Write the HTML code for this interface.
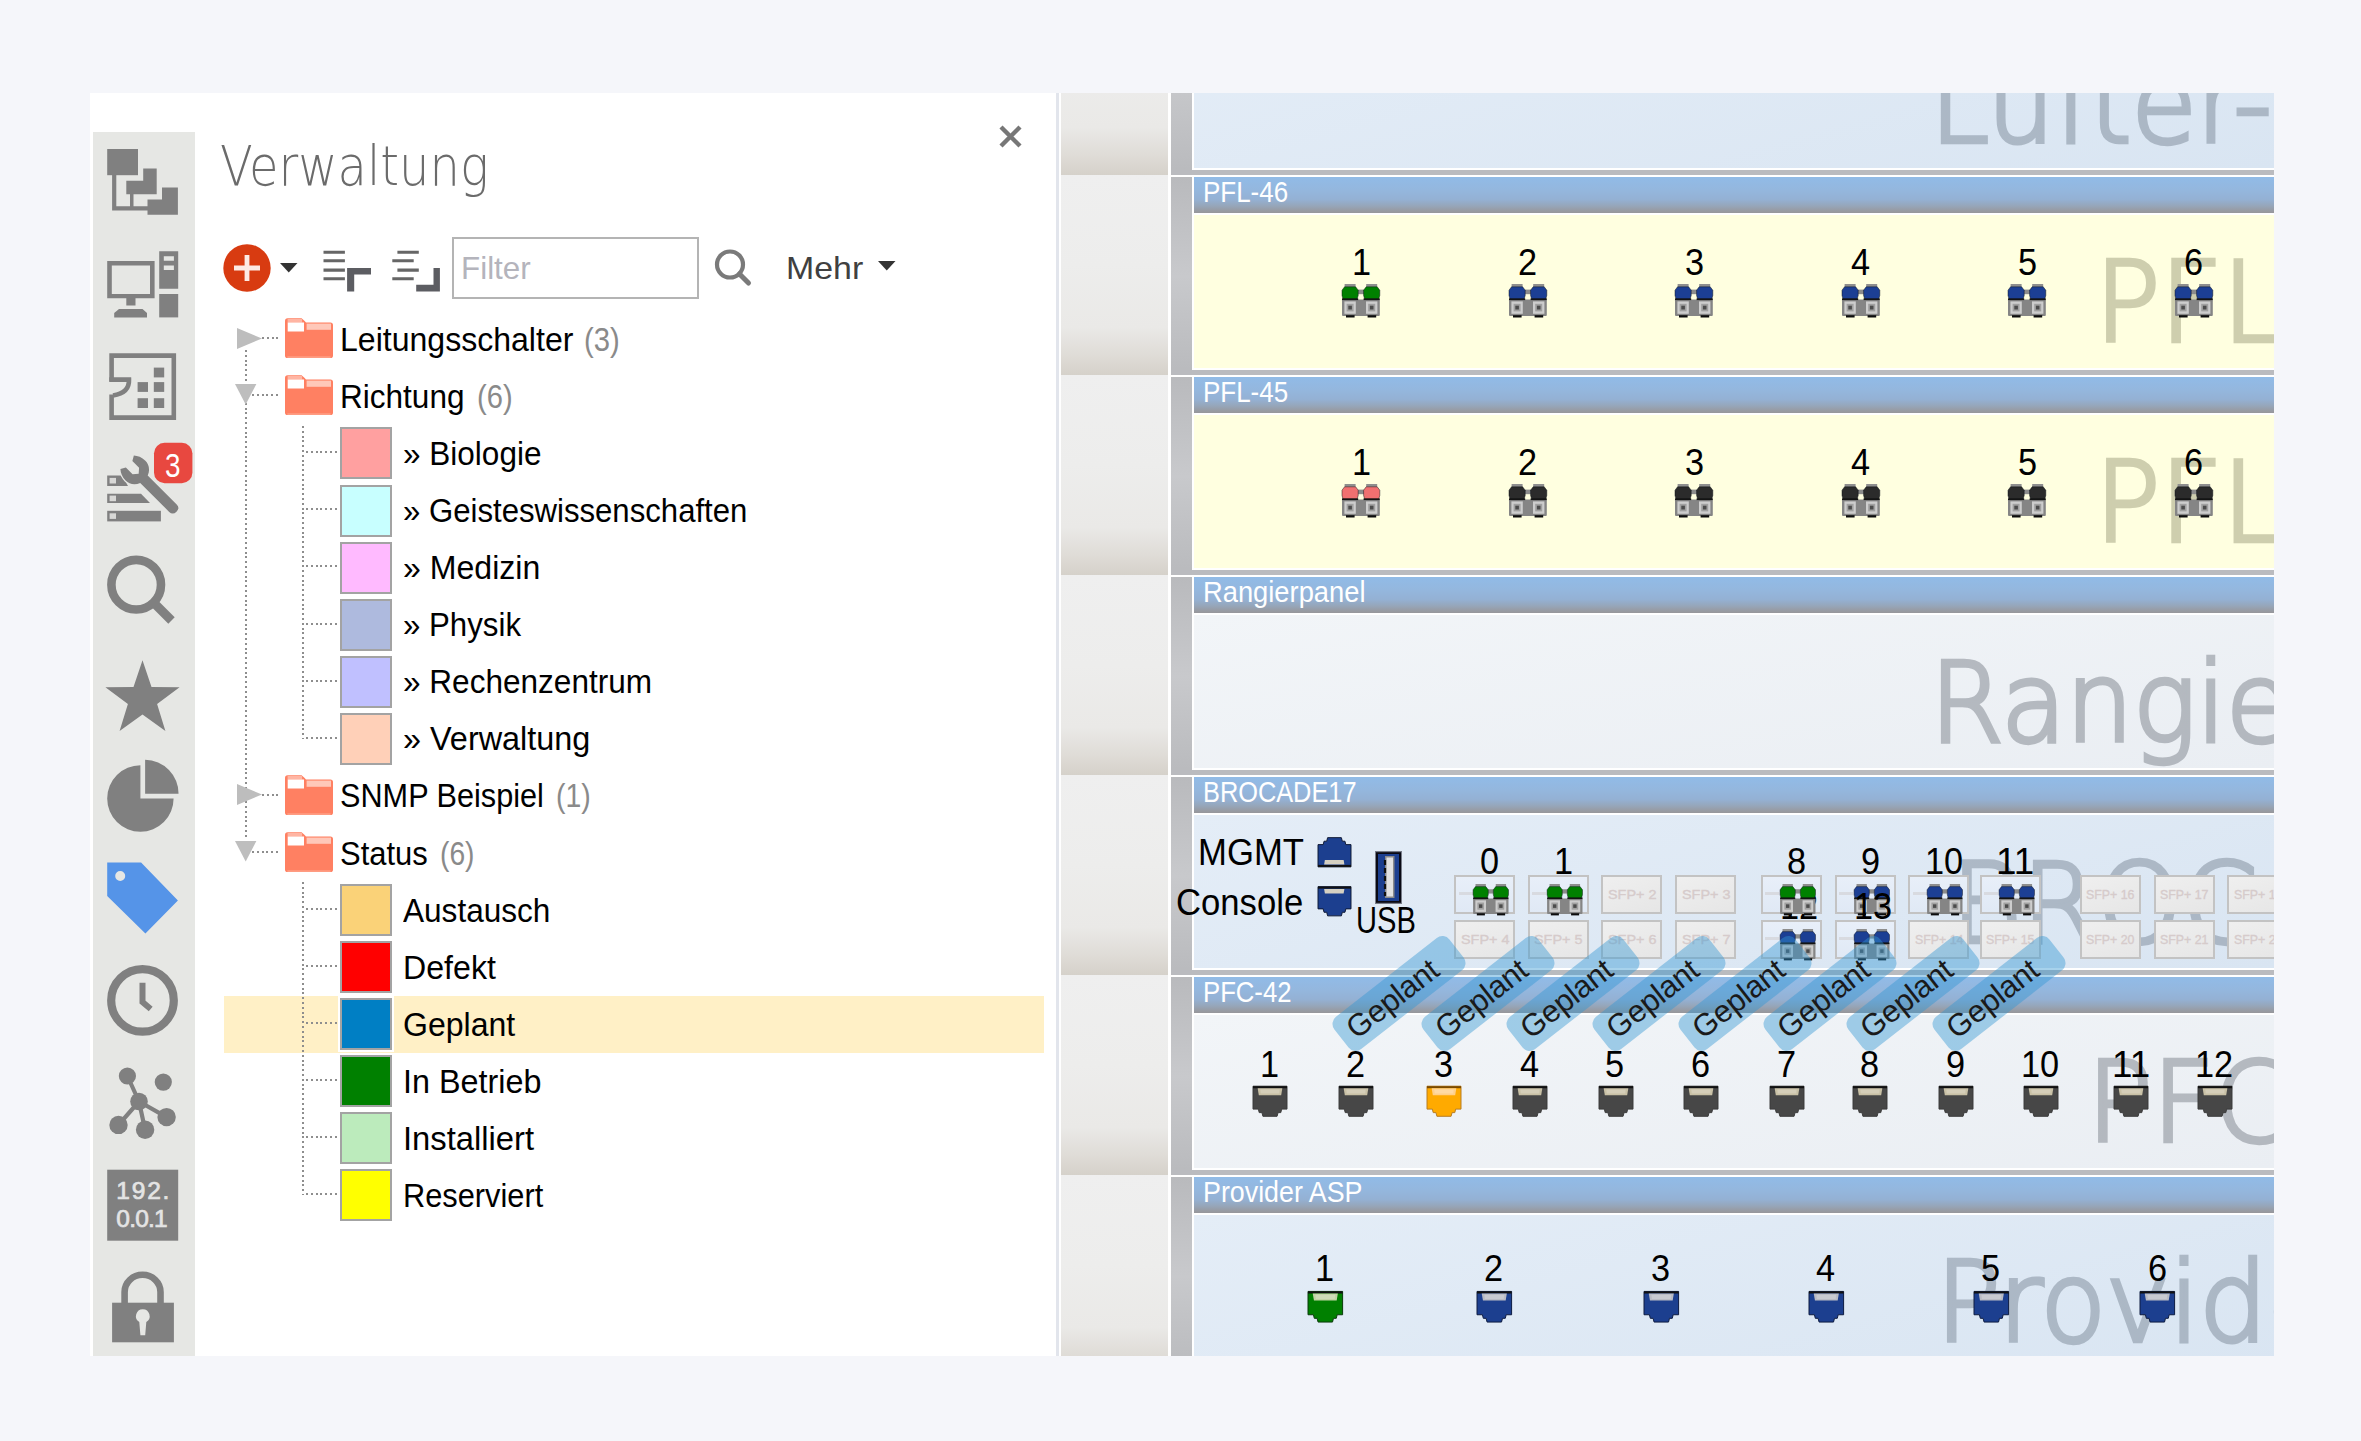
<!DOCTYPE html>
<html lang="de"><head><meta charset="utf-8"><title>Verwaltung</title>
<style>

html,body{margin:0;padding:0}
body{width:2361px;height:1441px;background:#f5f6fa;position:relative;overflow:hidden;font-family:'Liberation Sans',sans-serif}
.t{position:absolute;white-space:pre;line-height:1;transform-origin:0 50%}
.a{position:absolute}
#frame{left:90px;top:93px;width:2184px;height:1263px;background:#fff;overflow:hidden}
#side{left:93px;top:132px;width:102px;height:1224px;background:#e6e7e4}
svg{position:absolute;overflow:visible}
.sw{position:absolute;width:48px;height:48px;border:2px solid #a3a3a3;box-shadow:0 0 0 2px #fff}
.dv{position:absolute;width:2px;background:repeating-linear-gradient(180deg,#8e8e8e 0 2px,transparent 2px 4.8px)}
.dh{position:absolute;height:2px;background:repeating-linear-gradient(90deg,#8e8e8e 0 2px,transparent 2px 4.8px)}
.rk{position:absolute;left:1061px;width:1213px;height:200px}
.lc{position:absolute;left:0;top:0;width:107px;height:200px;background:linear-gradient(#efefef 0%,#ededec 45%,#eae9e7 76%,#dfdcd7 90%,#d5d1ca 100%)}
.vb{position:absolute;left:110px;top:2px;width:21px;height:198px;background:linear-gradient(#b9babd,#c8c9cc 50%,#b9babd)}
.bl{position:absolute;left:110px;top:195px;width:1104px;height:5px;background:#babbbf}
.tb{position:absolute;left:133px;top:2px;width:1081px;height:36px;background:linear-gradient(#91bbe7 0%,#94b7de 35%,#94b1d4 62%,#96a6ba 80%,#979ca5 92%,#97979b 100%)}
.ct{position:absolute;left:133px;top:40px;width:1081px;height:153px;overflow:hidden}
.yl{background:#ffffe0}
.bu{background:linear-gradient(165deg,#e4edf7,#d9e5f2)}
.gy{background:linear-gradient(170deg,#f2f5f8,#eaeef3)}

</style></head>
<body>
<div id="frame" class="a"></div>
<div id="side" class="a"></div>
<svg style="left:0;top:0" width="2361" height="1441" viewBox="0 0 2361 1441"><g fill="#808080"><rect x="107.2" y="149" width="30.8" height="26.2"/><path d="M143.2 168.5 H156.7 V194.3 H126.3 V180.8 H143.2Z"/><path d="M162 187.5 H177.9 V214.8 H147.5 V199.6 H162Z"/><path d="M112.1 175 H116.3 V206.3 H130 V194 H133.5 V206.3 H148 V210.5 H112.1Z"/></g><g fill="#808080"><path d="M107.2 261 H154.6 V298.3 H107.2Z M111.8 265.4 V293.9 H150 V265.4Z" fill-rule="evenodd"/><rect x="126.3" y="298" width="9.2" height="7.5"/><path d="M119 308.9 H142.5 L147 313 V317.4 H114.2 V313Z"/><path d="M159.2 251.3 H178.2 V288.8 H159.2Z M163.8 256.2 V260.8 H173.9 V256.2Z M163.8 265.4 V270 H173.9 V265.4Z" fill-rule="evenodd"/><rect x="159.2" y="294" width="19" height="23.4"/></g><g fill="none" stroke="#808080" stroke-width="4.6"><path d="M111.6 381.5 V355.6 H173.8 V417.6 H111.6 V394.5"/><path d="M109.3 379.6 H129 Q129.5 393 113 395.5"/></g><g fill="#808080"><rect x="153.8" y="367.6" width="10.4" height="9.8"/><rect x="137.6" y="382.1" width="10.4" height="9.8"/><rect x="153.8" y="382.1" width="10.4" height="9.8"/><rect x="137.6" y="398.2" width="10.4" height="9.8"/><rect x="153.8" y="398.2" width="10.4" height="9.8"/></g><g fill="#808080"><path d="M107.2 475.4 H122 L128 486 H107.2Z"/><path d="M107.2 493.8 H141 L150 503 H107.2Z"/><rect x="107.2" y="510.8" width="53.7" height="10.6"/><rect x="109.6" y="477.9" width="6.4" height="5.6" fill="#d8d8d6"/><rect x="109.6" y="495.6" width="6.4" height="5.6" fill="#d8d8d6"/><rect x="109.6" y="513.3" width="6.4" height="5.6" fill="#d8d8d6"/></g><g transform="translate(137.6 472.8) rotate(-45)"><path d="M-5.3 9 V50 Q-5.3 55 0 55 Q5.3 55 5.3 50 V9 C11 7 14 2 14 -3 C14 -8 12 -12 9.5 -14.8 L4.6 -12 V-2.5 L0 1.5 L-4.6 -2.5 V-12 L-9.5 -14.8 C-12 -12 -14 -8 -14 -3 C-14 2 -11 7 -5.3 9Z" fill="#808080" stroke="#e6e7e4" stroke-width="2.4" paint-order="stroke"/></g><rect x="154" y="442.8" width="38.4" height="40.4" rx="10.5" fill="#e84840"/><circle cx="136.2" cy="584.7" r="24.8" fill="none" stroke="#808080" stroke-width="8.6"/><path d="M154.5 603.5 L171.5 620.5" stroke="#808080" stroke-width="9" stroke-linecap="butt"/><polygon points="142.5,660.3 151.5,686.9 179.6,687.2 157.1,704.0 165.4,730.9 142.5,714.6 119.6,730.9 127.9,704.0 105.4,687.2 133.5,686.9" fill="#808080"/><path d="M140.4 798.5 V765.3 A33.2 33.2 0 1 0 173.6 798.5Z" fill="#808080"/><path d="M145.1 793.8 V759.8 A34 33.4 0 0 1 178.5 793.8Z" fill="#808080"/><path d="M107.2 862.6 H141.1 L177.9 900.4 L145.4 933.6 L107.2 896.1Z M120.2 871 A5 5 0 1 0 120.2 881 A5 5 0 1 0 120.2 871Z" fill="#5594e8" fill-rule="evenodd"/><circle cx="142.5" cy="1000.4" r="31.3" fill="none" stroke="#808080" stroke-width="8.2"/><path d="M142.5 982.7 V1002 L150.7 1009" fill="none" stroke="#808080" stroke-width="6" stroke-linejoin="miter"/><g stroke="#808080" stroke-width="4.2"><path d="M139 1101.5 L127.4 1076 M139 1101.5 L166.6 1117.1 M139 1101.5 L145.1 1129.8 M139 1101.5 L118.5 1124.9"/></g><g fill="#808080"><circle cx="139" cy="1101.5" r="8.8"/><circle cx="127.4" cy="1076" r="8.6"/><circle cx="163.3" cy="1082.1" r="8.6"/><circle cx="166.6" cy="1117.1" r="9.2"/><circle cx="145.1" cy="1129.8" r="9.2"/><circle cx="118.5" cy="1124.9" r="9.2"/></g><rect x="107.2" y="1169.7" width="71" height="71" fill="#808080"/><rect x="112.1" y="1302.7" width="61.8" height="39.6" fill="#808080"/><path d="M124.6 1304 V1292 A17.9 17.2 0 0 1 160.5 1292 V1304" fill="none" stroke="#808080" stroke-width="6.6"/><path d="M142.8 1309.2 A6.9 6.9 0 0 1 146.3 1322 L145.2 1335.2 H140.4 L139.3 1322 A6.9 6.9 0 0 1 142.8 1309.2Z" fill="#e6e7e4"/></svg>
<span class="t" style="left:165.2px;top:449.4px;font-size:33px;color:#fff;transform:scaleX(0.8443);">3</span>
<span class="t" style="left:116.3px;top:1179.4px;font-size:24.5px;color:#e4e4e4;letter-spacing:1.80px;-webkit-text-stroke:.7px #e4e4e4;">192.</span>
<span class="t" style="left:116.3px;top:1207.2px;font-size:24.5px;color:#e4e4e4;letter-spacing:-0.78px;-webkit-text-stroke:.7px #e4e4e4;">0.0.1</span>
<span class="t" style="left:219.8px;top:137.6px;font-size:56px;color:#6b6b6b;font-family:'DejaVu Sans', sans-serif;font-weight:200;transform:scaleX(0.8566);">Verwaltung</span>
<div class="a" style="left:224px;top:996px;width:820px;height:57px;background:#fff0c6"></div>
<div class="dv" style="left:245px;top:350px;height:490px"></div>
<div class="dv" style="left:302.3px;top:425.5px;height:313px"></div>
<div class="dv" style="left:302.3px;top:882px;height:313px"></div>
<div class="dh" style="left:262px;top:337.1px;width:16.5px"></div>
<svg style="left:237px;top:327.5px" width="26" height="22"><path d="M0 0 L25 10.5 L0 21Z" fill="#bdbdbd"/></svg>
<svg style="left:285.2px;top:318.1px" width="48" height="40" viewBox="0 0 48 40"><path d="M0 3 Q0 .3 2.6 .3 H16.6 L19.4 2.8 L21 4.4 H45.4 Q48 4.4 48 7 V37.4 Q48 40 45.4 40 H2.6 Q0 40 0 37.4Z" fill="#ff8062"/><rect x="2.6" y="1" width="14.5" height="3.6" fill="#ffb5a3"/><rect x="2.7" y="4.5" width="16.3" height="9" fill="#fff"/><rect x="21.6" y="5.6" width="24.4" height="6.2" fill="#ffc8b9"/><rect x="2.4" y="38.2" width="43.2" height="1.8" fill="#ffa890" opacity=".7"/></svg>
<span class="t" style="left:339.6px;top:322.9px;font-size:33px;color:#000;transform:scaleX(0.9712);">Leitungsschalter</span>
<span class="t" style="left:584.0px;top:322.9px;font-size:33px;color:#8a8a8a;transform:scaleX(0.8849);">(3)</span>
<div class="dh" style="left:252.4px;top:394.2px;width:26px"></div>
<svg style="left:235.3px;top:384.1px" width="22" height="22"><path d="M0 0 L21.4 0 L10.7 20.6Z" fill="#bebebe"/></svg>
<svg style="left:285.2px;top:375.2px" width="48" height="40" viewBox="0 0 48 40"><path d="M0 3 Q0 .3 2.6 .3 H16.6 L19.4 2.8 L21 4.4 H45.4 Q48 4.4 48 7 V37.4 Q48 40 45.4 40 H2.6 Q0 40 0 37.4Z" fill="#ff8062"/><rect x="2.6" y="1" width="14.5" height="3.6" fill="#ffb5a3"/><rect x="2.7" y="4.5" width="16.3" height="9" fill="#fff"/><rect x="21.6" y="5.6" width="24.4" height="6.2" fill="#ffc8b9"/><rect x="2.4" y="38.2" width="43.2" height="1.8" fill="#ffa890" opacity=".7"/></svg>
<span class="t" style="left:339.6px;top:379.9px;font-size:33px;color:#000;transform:scaleX(0.9559);">Richtung</span>
<span class="t" style="left:476.8px;top:379.9px;font-size:33px;color:#8a8a8a;transform:scaleX(0.8824);">(6)</span>
<div class="dh" style="left:262px;top:793.7px;width:16.5px"></div>
<svg style="left:237px;top:784.1px" width="26" height="22"><path d="M0 0 L25 10.5 L0 21Z" fill="#bdbdbd"/></svg>
<svg style="left:285.2px;top:774.7px" width="48" height="40" viewBox="0 0 48 40"><path d="M0 3 Q0 .3 2.6 .3 H16.6 L19.4 2.8 L21 4.4 H45.4 Q48 4.4 48 7 V37.4 Q48 40 45.4 40 H2.6 Q0 40 0 37.4Z" fill="#ff8062"/><rect x="2.6" y="1" width="14.5" height="3.6" fill="#ffb5a3"/><rect x="2.7" y="4.5" width="16.3" height="9" fill="#fff"/><rect x="21.6" y="5.6" width="24.4" height="6.2" fill="#ffc8b9"/><rect x="2.4" y="38.2" width="43.2" height="1.8" fill="#ffa890" opacity=".7"/></svg>
<span class="t" style="left:339.6px;top:779.4px;font-size:33px;color:#000;transform:scaleX(0.9290);">SNMP Beispiel</span>
<span class="t" style="left:555.7px;top:779.4px;font-size:33px;color:#8a8a8a;transform:scaleX(0.8626);">(1)</span>
<div class="dh" style="left:252.4px;top:850.7px;width:26px"></div>
<svg style="left:235.3px;top:840.6px" width="22" height="22"><path d="M0 0 L21.4 0 L10.7 20.6Z" fill="#bebebe"/></svg>
<svg style="left:285.2px;top:831.7px" width="48" height="40" viewBox="0 0 48 40"><path d="M0 3 Q0 .3 2.6 .3 H16.6 L19.4 2.8 L21 4.4 H45.4 Q48 4.4 48 7 V37.4 Q48 40 45.4 40 H2.6 Q0 40 0 37.4Z" fill="#ff8062"/><rect x="2.6" y="1" width="14.5" height="3.6" fill="#ffb5a3"/><rect x="2.7" y="4.5" width="16.3" height="9" fill="#fff"/><rect x="21.6" y="5.6" width="24.4" height="6.2" fill="#ffc8b9"/><rect x="2.4" y="38.2" width="43.2" height="1.8" fill="#ffa890" opacity=".7"/></svg>
<span class="t" style="left:339.6px;top:836.5px;font-size:33px;color:#000;transform:scaleX(0.9373);">Status</span>
<span class="t" style="left:439.8px;top:836.5px;font-size:33px;color:#8a8a8a;transform:scaleX(0.8552);">(6)</span>
<div class="dh" style="left:305.6px;top:451.2px;width:31px"></div>
<div class="sw" style="left:340.2px;top:427.4px;background:#ffa0a0"></div>
<span class="t" style="left:403.1px;top:437.0px;font-size:33px;color:#000;transform:scaleX(0.9555);">» Biologie</span>
<div class="dh" style="left:305.6px;top:508.3px;width:31px"></div>
<div class="sw" style="left:340.2px;top:484.5px;background:#c8ffff"></div>
<span class="t" style="left:403.1px;top:494.1px;font-size:33px;color:#000;transform:scaleX(0.9435);">» Geisteswissenschaften</span>
<div class="dh" style="left:305.6px;top:565.4px;width:31px"></div>
<div class="sw" style="left:340.2px;top:541.6px;background:#ffbaff"></div>
<span class="t" style="left:403.1px;top:551.1px;font-size:33px;color:#000;transform:scaleX(0.9721);">» Medizin</span>
<div class="dh" style="left:305.6px;top:622.5px;width:31px"></div>
<div class="sw" style="left:340.2px;top:598.6px;background:#aebade"></div>
<span class="t" style="left:403.1px;top:608.2px;font-size:33px;color:#000;transform:scaleX(0.9461);">» Physik</span>
<div class="dh" style="left:305.6px;top:679.5px;width:31px"></div>
<div class="sw" style="left:340.2px;top:655.7px;background:#c0c0ff"></div>
<span class="t" style="left:403.1px;top:665.3px;font-size:33px;color:#000;transform:scaleX(0.9563);">» Rechenzentrum</span>
<div class="dh" style="left:305.6px;top:736.6px;width:31px"></div>
<div class="sw" style="left:340.2px;top:712.8px;background:#ffd0b8"></div>
<span class="t" style="left:403.1px;top:722.4px;font-size:33px;color:#000;transform:scaleX(0.9821);">» Verwaltung</span>
<div class="dh" style="left:305.6px;top:907.8px;width:31px"></div>
<div class="sw" style="left:340.2px;top:884.0px;background:#fad278"></div>
<span class="t" style="left:403.1px;top:893.6px;font-size:33px;color:#000;transform:scaleX(0.9566);">Austausch</span>
<div class="dh" style="left:305.6px;top:964.9px;width:31px"></div>
<div class="sw" style="left:340.2px;top:941.1px;background:#ff0000"></div>
<span class="t" style="left:403.1px;top:950.6px;font-size:33px;color:#000;transform:scaleX(0.9740);">Defekt</span>
<div class="dh" style="left:305.6px;top:1021.9px;width:31px"></div>
<div class="sw" style="left:340.2px;top:998.1px;background:#007fc4"></div>
<span class="t" style="left:403.1px;top:1007.7px;font-size:33px;color:#000;transform:scaleX(0.9706);">Geplant</span>
<div class="dh" style="left:305.6px;top:1079.0px;width:31px"></div>
<div class="sw" style="left:340.2px;top:1055.2px;background:#008000"></div>
<span class="t" style="left:403.1px;top:1064.8px;font-size:33px;color:#000;transform:scaleX(0.9798);">In Betrieb</span>
<div class="dh" style="left:305.6px;top:1136.1px;width:31px"></div>
<div class="sw" style="left:340.2px;top:1112.3px;background:#bcebbc"></div>
<span class="t" style="left:403.1px;top:1121.8px;font-size:33px;color:#000;transform:scaleX(0.9927);">Installiert</span>
<div class="dh" style="left:305.6px;top:1193.1px;width:31px"></div>
<div class="sw" style="left:340.2px;top:1169.3px;background:#ffff00"></div>
<span class="t" style="left:403.1px;top:1178.9px;font-size:33px;color:#000;transform:scaleX(0.9323);">Reserviert</span>
<svg style="left:223px;top:244px" width="48" height="48" viewBox="0 0 48 48"><circle cx="24" cy="24" r="23.7" fill="#d83b11"/><path d="M11 24 H37 M24 11 V37" stroke="#fdeae4" stroke-width="4.8"/></svg>
<svg style="left:280px;top:263px" width="18" height="10"><path d="M0 0 H17.5 L8.75 9.5Z" fill="#333"/></svg>
<svg style="left:0;top:0" width="460" height="300" viewBox="0 0 460 300"><g stroke="#666" stroke-width="3.1"><path d="M323.5 252.3 H344.9 M323.5 260.8 H344.9 M323.5 270.1 H344.9 M323.5 278.7 H344.9"/><path d="M397.4 252.3 H418.8 M392.3 260.8 H413.7 M397.4 270.1 H418.8 M392.3 278.7 H413.7"/></g><g fill="#5c5d62"><path d="M347.1 268 H371 V274.6 H354.2 V291.4 H347.1Z"/><path d="M433.5 268 H439.9 V291.4 H416.2 V284.8 H433.5Z"/></g></svg>
<div class="a" style="left:452px;top:237px;width:243px;height:58px;border:2px solid #b4b4b4;background:#fff"></div>
<span class="t" style="left:461.0px;top:252.4px;font-size:32px;color:#b4b4bc;transform:scaleX(0.9802);">Filter</span>
<svg style="left:713px;top:248px" width="40" height="40" viewBox="0 0 40 40"><circle cx="17" cy="16.5" r="13" fill="none" stroke="#7a7a7a" stroke-width="4.2"/><path d="M26.5 26 L35.5 35" stroke="#7a7a7a" stroke-width="5" stroke-linecap="round"/></svg>
<span class="t" style="left:786.3px;top:252.4px;font-size:32px;color:#404040;transform:scaleX(1.0589);">Mehr</span>
<svg style="left:878px;top:261px" width="18" height="10"><path d="M0 0 H17.5 L8.75 9.5Z" fill="#333"/></svg>
<svg style="left:999px;top:125px" width="23" height="23" viewBox="0 0 23 23"><path d="M2 2 L21 21 M21 2 L2 21" stroke="#777" stroke-width="4.4"/></svg>
<div class="a" style="left:1056px;top:93px;width:3px;height:1263px;background:#e2e5ec"></div>
<div class="a" id="rack" style="left:1061px;top:93px;width:1213px;height:1263px;overflow:hidden;background:#fff">
<div class="rk" style="top:-118px;left:0"><div class="lc"></div><div class="vb"></div><div class="bl"></div><div class="tb"></div><div class="ct bu"></div></div>
<span class="t" style="left:869.0px;top:-44.7px;font-size:111px;color:#7d8a99;font-family:'DejaVu Sans', sans-serif;font-weight:200;-webkit-text-stroke:4.4px #7d8a99;opacity:0.5;transform:scaleX(0.955);">Lüfter-</span>
<div class="rk" style="top:82px;left:0"><div class="lc"></div><div class="vb"></div><div class="bl"></div><div class="tb"></div><div class="ct yl"></div></div>
<span class="t" style="left:141.5px;top:84.4px;font-size:29.5px;color:#fff;transform:scaleX(0.8796);">PFL-46</span>
<span class="t" style="left:1034.0px;top:154.3px;font-size:111px;color:#8c8c6a;font-family:'DejaVu Sans', sans-serif;font-weight:200;-webkit-text-stroke:4.4px #8c8c6a;opacity:0.42;transform:scaleX(0.975);">PFL-46</span>
<div class="rk" style="top:282px;left:0"><div class="lc"></div><div class="vb"></div><div class="bl"></div><div class="tb"></div><div class="ct yl"></div></div>
<span class="t" style="left:141.5px;top:284.4px;font-size:29.5px;color:#fff;transform:scaleX(0.8796);">PFL-45</span>
<span class="t" style="left:1034.0px;top:354.3px;font-size:111px;color:#8c8c6a;font-family:'DejaVu Sans', sans-serif;font-weight:200;-webkit-text-stroke:4.4px #8c8c6a;opacity:0.42;transform:scaleX(0.975);">PFL-45</span>
<span class="t" style="left:291.0px;top:151.6px;font-size:36px;color:#000;transform:scaleX(0.9525);">1</span>
<svg style="left:281.0px;top:191.4px" width="37.8" height="33.5" viewBox="0 0 37.8 33.5"><rect x="0" y="15.5" width="37.8" height="16.4" rx="1" fill="#858585"/><rect x="15.8" y="5.6" width="6.2" height="4.6" fill="#8c8c8c"/><path d="M2.6 0 H13.6 V2.9 H2.6Z" fill="#8e8e8e"/><path d="M2.6 2.8 H13.6 L16.2 6.2 V11.4 L15.2 15 H1 L0 11.4 V6.2Z" fill="#008000" stroke="#0c1018" stroke-width=".8" stroke-opacity=".6"/><rect x="0" y="14.4" width="16.2" height="1.7" fill="#141414"/><rect x="2.4" y="17.4" width="11.4" height="12.4" fill="#cdcdcd"/><rect x="4.6" y="19.8" width="7" height="7.6" fill="#a0a0a0"/><rect x="6.3" y="21.7" width="3.6" height="3.8" fill="#4c4c4c"/><rect x="4" y="31.2" width="8.6" height="2.3" fill="#0c0c0c"/><path d="M24.200000000000003 0 H35.2 V2.9 H24.200000000000003Z" fill="#8e8e8e"/><path d="M24.200000000000003 2.8 H35.2 L37.8 6.2 V11.4 L36.8 15 H22.6 L21.6 11.4 V6.2Z" fill="#008000" stroke="#0c1018" stroke-width=".8" stroke-opacity=".6"/><rect x="21.6" y="14.4" width="16.2" height="1.7" fill="#141414"/><rect x="24.0" y="17.4" width="11.4" height="12.4" fill="#cdcdcd"/><rect x="26.200000000000003" y="19.8" width="7" height="7.6" fill="#a0a0a0"/><rect x="27.900000000000002" y="21.7" width="3.6" height="3.8" fill="#4c4c4c"/><rect x="25.6" y="31.2" width="8.6" height="2.3" fill="#0c0c0c"/></svg>
<span class="t" style="left:457.4px;top:151.6px;font-size:36px;color:#000;transform:scaleX(0.9525);">2</span>
<svg style="left:447.5px;top:191.4px" width="37.8" height="33.5" viewBox="0 0 37.8 33.5"><rect x="0" y="15.5" width="37.8" height="16.4" rx="1" fill="#858585"/><rect x="15.8" y="5.6" width="6.2" height="4.6" fill="#8c8c8c"/><path d="M2.6 0 H13.6 V2.9 H2.6Z" fill="#8e8e8e"/><path d="M2.6 2.8 H13.6 L16.2 6.2 V11.4 L15.2 15 H1 L0 11.4 V6.2Z" fill="#1c3f94" stroke="#0c1018" stroke-width=".8" stroke-opacity=".6"/><rect x="0" y="14.4" width="16.2" height="1.7" fill="#141414"/><rect x="2.4" y="17.4" width="11.4" height="12.4" fill="#cdcdcd"/><rect x="4.6" y="19.8" width="7" height="7.6" fill="#a0a0a0"/><rect x="6.3" y="21.7" width="3.6" height="3.8" fill="#4c4c4c"/><rect x="4" y="31.2" width="8.6" height="2.3" fill="#0c0c0c"/><path d="M24.200000000000003 0 H35.2 V2.9 H24.200000000000003Z" fill="#8e8e8e"/><path d="M24.200000000000003 2.8 H35.2 L37.8 6.2 V11.4 L36.8 15 H22.6 L21.6 11.4 V6.2Z" fill="#1c3f94" stroke="#0c1018" stroke-width=".8" stroke-opacity=".6"/><rect x="21.6" y="14.4" width="16.2" height="1.7" fill="#141414"/><rect x="24.0" y="17.4" width="11.4" height="12.4" fill="#cdcdcd"/><rect x="26.200000000000003" y="19.8" width="7" height="7.6" fill="#a0a0a0"/><rect x="27.900000000000002" y="21.7" width="3.6" height="3.8" fill="#4c4c4c"/><rect x="25.6" y="31.2" width="8.6" height="2.3" fill="#0c0c0c"/></svg>
<span class="t" style="left:623.9px;top:151.6px;font-size:36px;color:#000;transform:scaleX(0.9525);">3</span>
<svg style="left:614.0px;top:191.4px" width="37.8" height="33.5" viewBox="0 0 37.8 33.5"><rect x="0" y="15.5" width="37.8" height="16.4" rx="1" fill="#858585"/><rect x="15.8" y="5.6" width="6.2" height="4.6" fill="#8c8c8c"/><path d="M2.6 0 H13.6 V2.9 H2.6Z" fill="#8e8e8e"/><path d="M2.6 2.8 H13.6 L16.2 6.2 V11.4 L15.2 15 H1 L0 11.4 V6.2Z" fill="#1c3f94" stroke="#0c1018" stroke-width=".8" stroke-opacity=".6"/><rect x="0" y="14.4" width="16.2" height="1.7" fill="#141414"/><rect x="2.4" y="17.4" width="11.4" height="12.4" fill="#cdcdcd"/><rect x="4.6" y="19.8" width="7" height="7.6" fill="#a0a0a0"/><rect x="6.3" y="21.7" width="3.6" height="3.8" fill="#4c4c4c"/><rect x="4" y="31.2" width="8.6" height="2.3" fill="#0c0c0c"/><path d="M24.200000000000003 0 H35.2 V2.9 H24.200000000000003Z" fill="#8e8e8e"/><path d="M24.200000000000003 2.8 H35.2 L37.8 6.2 V11.4 L36.8 15 H22.6 L21.6 11.4 V6.2Z" fill="#1c3f94" stroke="#0c1018" stroke-width=".8" stroke-opacity=".6"/><rect x="21.6" y="14.4" width="16.2" height="1.7" fill="#141414"/><rect x="24.0" y="17.4" width="11.4" height="12.4" fill="#cdcdcd"/><rect x="26.200000000000003" y="19.8" width="7" height="7.6" fill="#a0a0a0"/><rect x="27.900000000000002" y="21.7" width="3.6" height="3.8" fill="#4c4c4c"/><rect x="25.6" y="31.2" width="8.6" height="2.3" fill="#0c0c0c"/></svg>
<span class="t" style="left:790.4px;top:151.6px;font-size:36px;color:#000;transform:scaleX(0.9525);">4</span>
<svg style="left:780.5px;top:191.4px" width="37.8" height="33.5" viewBox="0 0 37.8 33.5"><rect x="0" y="15.5" width="37.8" height="16.4" rx="1" fill="#858585"/><rect x="15.8" y="5.6" width="6.2" height="4.6" fill="#8c8c8c"/><path d="M2.6 0 H13.6 V2.9 H2.6Z" fill="#8e8e8e"/><path d="M2.6 2.8 H13.6 L16.2 6.2 V11.4 L15.2 15 H1 L0 11.4 V6.2Z" fill="#1c3f94" stroke="#0c1018" stroke-width=".8" stroke-opacity=".6"/><rect x="0" y="14.4" width="16.2" height="1.7" fill="#141414"/><rect x="2.4" y="17.4" width="11.4" height="12.4" fill="#cdcdcd"/><rect x="4.6" y="19.8" width="7" height="7.6" fill="#a0a0a0"/><rect x="6.3" y="21.7" width="3.6" height="3.8" fill="#4c4c4c"/><rect x="4" y="31.2" width="8.6" height="2.3" fill="#0c0c0c"/><path d="M24.200000000000003 0 H35.2 V2.9 H24.200000000000003Z" fill="#8e8e8e"/><path d="M24.200000000000003 2.8 H35.2 L37.8 6.2 V11.4 L36.8 15 H22.6 L21.6 11.4 V6.2Z" fill="#1c3f94" stroke="#0c1018" stroke-width=".8" stroke-opacity=".6"/><rect x="21.6" y="14.4" width="16.2" height="1.7" fill="#141414"/><rect x="24.0" y="17.4" width="11.4" height="12.4" fill="#cdcdcd"/><rect x="26.200000000000003" y="19.8" width="7" height="7.6" fill="#a0a0a0"/><rect x="27.900000000000002" y="21.7" width="3.6" height="3.8" fill="#4c4c4c"/><rect x="25.6" y="31.2" width="8.6" height="2.3" fill="#0c0c0c"/></svg>
<span class="t" style="left:956.9px;top:151.6px;font-size:36px;color:#000;transform:scaleX(0.9525);">5</span>
<svg style="left:947.0px;top:191.4px" width="37.8" height="33.5" viewBox="0 0 37.8 33.5"><rect x="0" y="15.5" width="37.8" height="16.4" rx="1" fill="#858585"/><rect x="15.8" y="5.6" width="6.2" height="4.6" fill="#8c8c8c"/><path d="M2.6 0 H13.6 V2.9 H2.6Z" fill="#8e8e8e"/><path d="M2.6 2.8 H13.6 L16.2 6.2 V11.4 L15.2 15 H1 L0 11.4 V6.2Z" fill="#1c3f94" stroke="#0c1018" stroke-width=".8" stroke-opacity=".6"/><rect x="0" y="14.4" width="16.2" height="1.7" fill="#141414"/><rect x="2.4" y="17.4" width="11.4" height="12.4" fill="#cdcdcd"/><rect x="4.6" y="19.8" width="7" height="7.6" fill="#a0a0a0"/><rect x="6.3" y="21.7" width="3.6" height="3.8" fill="#4c4c4c"/><rect x="4" y="31.2" width="8.6" height="2.3" fill="#0c0c0c"/><path d="M24.200000000000003 0 H35.2 V2.9 H24.200000000000003Z" fill="#8e8e8e"/><path d="M24.200000000000003 2.8 H35.2 L37.8 6.2 V11.4 L36.8 15 H22.6 L21.6 11.4 V6.2Z" fill="#1c3f94" stroke="#0c1018" stroke-width=".8" stroke-opacity=".6"/><rect x="21.6" y="14.4" width="16.2" height="1.7" fill="#141414"/><rect x="24.0" y="17.4" width="11.4" height="12.4" fill="#cdcdcd"/><rect x="26.200000000000003" y="19.8" width="7" height="7.6" fill="#a0a0a0"/><rect x="27.900000000000002" y="21.7" width="3.6" height="3.8" fill="#4c4c4c"/><rect x="25.6" y="31.2" width="8.6" height="2.3" fill="#0c0c0c"/></svg>
<span class="t" style="left:1123.4px;top:151.6px;font-size:36px;color:#000;transform:scaleX(0.9525);">6</span>
<svg style="left:1113.5px;top:191.4px" width="37.8" height="33.5" viewBox="0 0 37.8 33.5"><rect x="0" y="15.5" width="37.8" height="16.4" rx="1" fill="#858585"/><rect x="15.8" y="5.6" width="6.2" height="4.6" fill="#8c8c8c"/><path d="M2.6 0 H13.6 V2.9 H2.6Z" fill="#8e8e8e"/><path d="M2.6 2.8 H13.6 L16.2 6.2 V11.4 L15.2 15 H1 L0 11.4 V6.2Z" fill="#1c3f94" stroke="#0c1018" stroke-width=".8" stroke-opacity=".6"/><rect x="0" y="14.4" width="16.2" height="1.7" fill="#141414"/><rect x="2.4" y="17.4" width="11.4" height="12.4" fill="#cdcdcd"/><rect x="4.6" y="19.8" width="7" height="7.6" fill="#a0a0a0"/><rect x="6.3" y="21.7" width="3.6" height="3.8" fill="#4c4c4c"/><rect x="4" y="31.2" width="8.6" height="2.3" fill="#0c0c0c"/><path d="M24.200000000000003 0 H35.2 V2.9 H24.200000000000003Z" fill="#8e8e8e"/><path d="M24.200000000000003 2.8 H35.2 L37.8 6.2 V11.4 L36.8 15 H22.6 L21.6 11.4 V6.2Z" fill="#1c3f94" stroke="#0c1018" stroke-width=".8" stroke-opacity=".6"/><rect x="21.6" y="14.4" width="16.2" height="1.7" fill="#141414"/><rect x="24.0" y="17.4" width="11.4" height="12.4" fill="#cdcdcd"/><rect x="26.200000000000003" y="19.8" width="7" height="7.6" fill="#a0a0a0"/><rect x="27.900000000000002" y="21.7" width="3.6" height="3.8" fill="#4c4c4c"/><rect x="25.6" y="31.2" width="8.6" height="2.3" fill="#0c0c0c"/></svg>
<span class="t" style="left:291.0px;top:351.6px;font-size:36px;color:#000;transform:scaleX(0.9525);">1</span>
<svg style="left:281.0px;top:391.4px" width="37.8" height="33.5" viewBox="0 0 37.8 33.5"><rect x="0" y="15.5" width="37.8" height="16.4" rx="1" fill="#858585"/><rect x="15.8" y="5.6" width="6.2" height="4.6" fill="#8c8c8c"/><path d="M2.6 0 H13.6 V2.9 H2.6Z" fill="#8e8e8e"/><path d="M2.6 2.8 H13.6 L16.2 6.2 V11.4 L15.2 15 H1 L0 11.4 V6.2Z" fill="#f07070" stroke="#0c1018" stroke-width=".8" stroke-opacity=".6"/><rect x="0" y="14.4" width="16.2" height="1.7" fill="#141414"/><rect x="2.4" y="17.4" width="11.4" height="12.4" fill="#cdcdcd"/><rect x="4.6" y="19.8" width="7" height="7.6" fill="#a0a0a0"/><rect x="6.3" y="21.7" width="3.6" height="3.8" fill="#4c4c4c"/><rect x="4" y="31.2" width="8.6" height="2.3" fill="#0c0c0c"/><path d="M24.200000000000003 0 H35.2 V2.9 H24.200000000000003Z" fill="#8e8e8e"/><path d="M24.200000000000003 2.8 H35.2 L37.8 6.2 V11.4 L36.8 15 H22.6 L21.6 11.4 V6.2Z" fill="#f07070" stroke="#0c1018" stroke-width=".8" stroke-opacity=".6"/><rect x="21.6" y="14.4" width="16.2" height="1.7" fill="#141414"/><rect x="24.0" y="17.4" width="11.4" height="12.4" fill="#cdcdcd"/><rect x="26.200000000000003" y="19.8" width="7" height="7.6" fill="#a0a0a0"/><rect x="27.900000000000002" y="21.7" width="3.6" height="3.8" fill="#4c4c4c"/><rect x="25.6" y="31.2" width="8.6" height="2.3" fill="#0c0c0c"/></svg>
<span class="t" style="left:457.4px;top:351.6px;font-size:36px;color:#000;transform:scaleX(0.9525);">2</span>
<svg style="left:447.5px;top:391.4px" width="37.8" height="33.5" viewBox="0 0 37.8 33.5"><rect x="0" y="15.5" width="37.8" height="16.4" rx="1" fill="#858585"/><rect x="15.8" y="5.6" width="6.2" height="4.6" fill="#8c8c8c"/><path d="M2.6 0 H13.6 V2.9 H2.6Z" fill="#8e8e8e"/><path d="M2.6 2.8 H13.6 L16.2 6.2 V11.4 L15.2 15 H1 L0 11.4 V6.2Z" fill="#2b2b2b" stroke="#0c1018" stroke-width=".8" stroke-opacity=".6"/><rect x="0" y="14.4" width="16.2" height="1.7" fill="#141414"/><rect x="2.4" y="17.4" width="11.4" height="12.4" fill="#cdcdcd"/><rect x="4.6" y="19.8" width="7" height="7.6" fill="#a0a0a0"/><rect x="6.3" y="21.7" width="3.6" height="3.8" fill="#4c4c4c"/><rect x="4" y="31.2" width="8.6" height="2.3" fill="#0c0c0c"/><path d="M24.200000000000003 0 H35.2 V2.9 H24.200000000000003Z" fill="#8e8e8e"/><path d="M24.200000000000003 2.8 H35.2 L37.8 6.2 V11.4 L36.8 15 H22.6 L21.6 11.4 V6.2Z" fill="#2b2b2b" stroke="#0c1018" stroke-width=".8" stroke-opacity=".6"/><rect x="21.6" y="14.4" width="16.2" height="1.7" fill="#141414"/><rect x="24.0" y="17.4" width="11.4" height="12.4" fill="#cdcdcd"/><rect x="26.200000000000003" y="19.8" width="7" height="7.6" fill="#a0a0a0"/><rect x="27.900000000000002" y="21.7" width="3.6" height="3.8" fill="#4c4c4c"/><rect x="25.6" y="31.2" width="8.6" height="2.3" fill="#0c0c0c"/></svg>
<span class="t" style="left:623.9px;top:351.6px;font-size:36px;color:#000;transform:scaleX(0.9525);">3</span>
<svg style="left:614.0px;top:391.4px" width="37.8" height="33.5" viewBox="0 0 37.8 33.5"><rect x="0" y="15.5" width="37.8" height="16.4" rx="1" fill="#858585"/><rect x="15.8" y="5.6" width="6.2" height="4.6" fill="#8c8c8c"/><path d="M2.6 0 H13.6 V2.9 H2.6Z" fill="#8e8e8e"/><path d="M2.6 2.8 H13.6 L16.2 6.2 V11.4 L15.2 15 H1 L0 11.4 V6.2Z" fill="#2b2b2b" stroke="#0c1018" stroke-width=".8" stroke-opacity=".6"/><rect x="0" y="14.4" width="16.2" height="1.7" fill="#141414"/><rect x="2.4" y="17.4" width="11.4" height="12.4" fill="#cdcdcd"/><rect x="4.6" y="19.8" width="7" height="7.6" fill="#a0a0a0"/><rect x="6.3" y="21.7" width="3.6" height="3.8" fill="#4c4c4c"/><rect x="4" y="31.2" width="8.6" height="2.3" fill="#0c0c0c"/><path d="M24.200000000000003 0 H35.2 V2.9 H24.200000000000003Z" fill="#8e8e8e"/><path d="M24.200000000000003 2.8 H35.2 L37.8 6.2 V11.4 L36.8 15 H22.6 L21.6 11.4 V6.2Z" fill="#2b2b2b" stroke="#0c1018" stroke-width=".8" stroke-opacity=".6"/><rect x="21.6" y="14.4" width="16.2" height="1.7" fill="#141414"/><rect x="24.0" y="17.4" width="11.4" height="12.4" fill="#cdcdcd"/><rect x="26.200000000000003" y="19.8" width="7" height="7.6" fill="#a0a0a0"/><rect x="27.900000000000002" y="21.7" width="3.6" height="3.8" fill="#4c4c4c"/><rect x="25.6" y="31.2" width="8.6" height="2.3" fill="#0c0c0c"/></svg>
<span class="t" style="left:790.4px;top:351.6px;font-size:36px;color:#000;transform:scaleX(0.9525);">4</span>
<svg style="left:780.5px;top:391.4px" width="37.8" height="33.5" viewBox="0 0 37.8 33.5"><rect x="0" y="15.5" width="37.8" height="16.4" rx="1" fill="#858585"/><rect x="15.8" y="5.6" width="6.2" height="4.6" fill="#8c8c8c"/><path d="M2.6 0 H13.6 V2.9 H2.6Z" fill="#8e8e8e"/><path d="M2.6 2.8 H13.6 L16.2 6.2 V11.4 L15.2 15 H1 L0 11.4 V6.2Z" fill="#2b2b2b" stroke="#0c1018" stroke-width=".8" stroke-opacity=".6"/><rect x="0" y="14.4" width="16.2" height="1.7" fill="#141414"/><rect x="2.4" y="17.4" width="11.4" height="12.4" fill="#cdcdcd"/><rect x="4.6" y="19.8" width="7" height="7.6" fill="#a0a0a0"/><rect x="6.3" y="21.7" width="3.6" height="3.8" fill="#4c4c4c"/><rect x="4" y="31.2" width="8.6" height="2.3" fill="#0c0c0c"/><path d="M24.200000000000003 0 H35.2 V2.9 H24.200000000000003Z" fill="#8e8e8e"/><path d="M24.200000000000003 2.8 H35.2 L37.8 6.2 V11.4 L36.8 15 H22.6 L21.6 11.4 V6.2Z" fill="#2b2b2b" stroke="#0c1018" stroke-width=".8" stroke-opacity=".6"/><rect x="21.6" y="14.4" width="16.2" height="1.7" fill="#141414"/><rect x="24.0" y="17.4" width="11.4" height="12.4" fill="#cdcdcd"/><rect x="26.200000000000003" y="19.8" width="7" height="7.6" fill="#a0a0a0"/><rect x="27.900000000000002" y="21.7" width="3.6" height="3.8" fill="#4c4c4c"/><rect x="25.6" y="31.2" width="8.6" height="2.3" fill="#0c0c0c"/></svg>
<span class="t" style="left:956.9px;top:351.6px;font-size:36px;color:#000;transform:scaleX(0.9525);">5</span>
<svg style="left:947.0px;top:391.4px" width="37.8" height="33.5" viewBox="0 0 37.8 33.5"><rect x="0" y="15.5" width="37.8" height="16.4" rx="1" fill="#858585"/><rect x="15.8" y="5.6" width="6.2" height="4.6" fill="#8c8c8c"/><path d="M2.6 0 H13.6 V2.9 H2.6Z" fill="#8e8e8e"/><path d="M2.6 2.8 H13.6 L16.2 6.2 V11.4 L15.2 15 H1 L0 11.4 V6.2Z" fill="#2b2b2b" stroke="#0c1018" stroke-width=".8" stroke-opacity=".6"/><rect x="0" y="14.4" width="16.2" height="1.7" fill="#141414"/><rect x="2.4" y="17.4" width="11.4" height="12.4" fill="#cdcdcd"/><rect x="4.6" y="19.8" width="7" height="7.6" fill="#a0a0a0"/><rect x="6.3" y="21.7" width="3.6" height="3.8" fill="#4c4c4c"/><rect x="4" y="31.2" width="8.6" height="2.3" fill="#0c0c0c"/><path d="M24.200000000000003 0 H35.2 V2.9 H24.200000000000003Z" fill="#8e8e8e"/><path d="M24.200000000000003 2.8 H35.2 L37.8 6.2 V11.4 L36.8 15 H22.6 L21.6 11.4 V6.2Z" fill="#2b2b2b" stroke="#0c1018" stroke-width=".8" stroke-opacity=".6"/><rect x="21.6" y="14.4" width="16.2" height="1.7" fill="#141414"/><rect x="24.0" y="17.4" width="11.4" height="12.4" fill="#cdcdcd"/><rect x="26.200000000000003" y="19.8" width="7" height="7.6" fill="#a0a0a0"/><rect x="27.900000000000002" y="21.7" width="3.6" height="3.8" fill="#4c4c4c"/><rect x="25.6" y="31.2" width="8.6" height="2.3" fill="#0c0c0c"/></svg>
<span class="t" style="left:1123.4px;top:351.6px;font-size:36px;color:#000;transform:scaleX(0.9525);">6</span>
<svg style="left:1113.5px;top:391.4px" width="37.8" height="33.5" viewBox="0 0 37.8 33.5"><rect x="0" y="15.5" width="37.8" height="16.4" rx="1" fill="#858585"/><rect x="15.8" y="5.6" width="6.2" height="4.6" fill="#8c8c8c"/><path d="M2.6 0 H13.6 V2.9 H2.6Z" fill="#8e8e8e"/><path d="M2.6 2.8 H13.6 L16.2 6.2 V11.4 L15.2 15 H1 L0 11.4 V6.2Z" fill="#2b2b2b" stroke="#0c1018" stroke-width=".8" stroke-opacity=".6"/><rect x="0" y="14.4" width="16.2" height="1.7" fill="#141414"/><rect x="2.4" y="17.4" width="11.4" height="12.4" fill="#cdcdcd"/><rect x="4.6" y="19.8" width="7" height="7.6" fill="#a0a0a0"/><rect x="6.3" y="21.7" width="3.6" height="3.8" fill="#4c4c4c"/><rect x="4" y="31.2" width="8.6" height="2.3" fill="#0c0c0c"/><path d="M24.200000000000003 0 H35.2 V2.9 H24.200000000000003Z" fill="#8e8e8e"/><path d="M24.200000000000003 2.8 H35.2 L37.8 6.2 V11.4 L36.8 15 H22.6 L21.6 11.4 V6.2Z" fill="#2b2b2b" stroke="#0c1018" stroke-width=".8" stroke-opacity=".6"/><rect x="21.6" y="14.4" width="16.2" height="1.7" fill="#141414"/><rect x="24.0" y="17.4" width="11.4" height="12.4" fill="#cdcdcd"/><rect x="26.200000000000003" y="19.8" width="7" height="7.6" fill="#a0a0a0"/><rect x="27.900000000000002" y="21.7" width="3.6" height="3.8" fill="#4c4c4c"/><rect x="25.6" y="31.2" width="8.6" height="2.3" fill="#0c0c0c"/></svg>
<div class="rk" style="top:482px;left:0"><div class="lc"></div><div class="vb"></div><div class="bl"></div><div class="tb"></div><div class="ct gy"></div></div>
<span class="t" style="left:141.5px;top:484.4px;font-size:29.5px;color:#fff;transform:scaleX(0.9259);">Rangierpanel</span>
<span class="t" style="left:869.0px;top:554.3px;font-size:111px;color:#7d838c;font-family:'DejaVu Sans', sans-serif;font-weight:200;-webkit-text-stroke:4.4px #7d838c;opacity:0.5;transform:scaleX(0.953);">Rangierpanel</span>
<div class="rk" style="top:682px;left:0"><div class="lc"></div><div class="vb"></div><div class="bl"></div><div class="tb"></div><div class="ct bu"></div></div>
<span class="t" style="left:141.5px;top:684.4px;font-size:29.5px;color:#fff;transform:scaleX(0.8590);">BROCADE17</span>
<div class="rk" style="top:882px;left:0"><div class="lc"></div><div class="vb"></div><div class="bl"></div><div class="tb"></div><div class="ct gy"></div></div>
<span class="t" style="left:141.5px;top:884.4px;font-size:29.5px;color:#fff;transform:scaleX(0.8707);">PFC-42</span>
<div class="rk" style="top:1082px;left:0"><div class="lc"></div><div class="vb"></div><div class="bl"></div><div class="tb"></div><div class="ct bu"></div></div>
<span class="t" style="left:141.5px;top:1084.4px;font-size:29.5px;color:#fff;transform:scaleX(0.9091);">Provider ASP</span>
<span class="t" style="left:890.0px;top:754.5px;font-size:111px;color:#7d8a99;font-family:'DejaVu Sans', sans-serif;font-weight:200;-webkit-text-stroke:4.4px #7d8a99;opacity:0.5;transform:scaleX(0.975);">BROC</span>
<span class="t" style="left:136.6px;top:741.1px;font-size:37px;color:#000;transform:scaleX(0.9378);">MGMT</span>
<span class="t" style="left:115.4px;top:791.0px;font-size:37px;color:#000;transform:scaleX(0.9369);">Console</span>
<span class="t" style="left:295.1px;top:808.8px;font-size:37px;color:#000;transform:scaleX(0.7860);">USB</span>
<svg style="left:257.0px;top:743.5px" width="33" height="30.5" viewBox="0 0 35 31"><g transform="translate(0,31) scale(1,-1)"><path d="M0 0 H35 V23.6 H29.5 L28.6 27.2 H25.8 L24.8 31 H10.2 L9.2 27.2 H6.4 L5.5 23.6 H0Z" fill="#1c3f8f" stroke="#0c1530" stroke-width="1"/><rect x="0" y="0" width="35" height="2.1" fill="#111"/><path d="M6.5 2.6 H28 L27.2 7.4 H7.3Z" fill="#d5d0c2"/></g></svg>
<svg style="left:257.0px;top:793.3px" width="33" height="30.5" viewBox="0 0 35 31"><g><path d="M0 0 H35 V23.6 H29.5 L28.6 27.2 H25.8 L24.8 31 H10.2 L9.2 27.2 H6.4 L5.5 23.6 H0Z" fill="#1c3f8f" stroke="#0c1530" stroke-width="1"/><rect x="0" y="0" width="35" height="2.1" fill="#111"/><path d="M6.5 2.6 H28 L27.2 7.4 H7.3Z" fill="#d5d0c2"/></g></svg>
<svg style="left:313.5px;top:757.5px" width="27" height="53" viewBox="0 0 27 53"><rect x="0" y="0" width="27" height="53" fill="#777c88"/><rect x="1" y="1.2" width="25" height="50.6" fill="#0a0a14"/><rect x="3" y="3" width="21" height="47" fill="#1c3f8f"/><rect x="10" y="5" width="9.5" height="42" fill="#8a8a8a"/><rect x="11.5" y="6.5" width="6.5" height="39" fill="#e2e2e2"/><path d="M10 9 V45" stroke="#111" stroke-width="2.2" stroke-dasharray="5 3"/></svg>
<div class="a" style="left:393.0px;top:781.9px;width:57px;height:35.6px;border:2px solid #c3c3c3;background:linear-gradient(#e8eff9,#e0e9f5)"></div>
<div class="a" style="left:397.5px;top:798.9px;width:14px;height:3px;background:#d4d6da;opacity:.8"></div>
<div class="a" style="left:466.7px;top:781.9px;width:57px;height:35.6px;border:2px solid #c3c3c3;background:linear-gradient(#e8eff9,#e0e9f5)"></div>
<div class="a" style="left:471.2px;top:798.9px;width:14px;height:3px;background:#d4d6da;opacity:.8"></div>
<div class="a" style="left:540.4px;top:781.9px;width:57px;height:35.6px;border:2px solid #c3c3c3;background:linear-gradient(160deg,#efefef,#e6e6e6)"></div>
<span class="t" style="left:546.9px;top:795.5px;font-size:12.5px;color:#d6cbcb;transform:scaleX(1.1535);-webkit-text-stroke:.35px #d6cbcb;">SFP+ 2</span>
<div class="a" style="left:614.1px;top:781.9px;width:57px;height:35.6px;border:2px solid #c3c3c3;background:linear-gradient(160deg,#efefef,#e6e6e6)"></div>
<span class="t" style="left:620.6px;top:795.5px;font-size:12.5px;color:#d6cbcb;transform:scaleX(1.1535);-webkit-text-stroke:.35px #d6cbcb;">SFP+ 3</span>
<div class="a" style="left:699.8px;top:781.9px;width:57px;height:35.6px;border:2px solid #c3c3c3;background:linear-gradient(#e8eff9,#e0e9f5)"></div>
<div class="a" style="left:704.3px;top:798.9px;width:14px;height:3px;background:#d4d6da;opacity:.8"></div>
<div class="a" style="left:773.6px;top:781.9px;width:57px;height:35.6px;border:2px solid #c3c3c3;background:linear-gradient(#e8eff9,#e0e9f5)"></div>
<div class="a" style="left:778.1px;top:798.9px;width:14px;height:3px;background:#d4d6da;opacity:.8"></div>
<div class="a" style="left:847.3px;top:781.9px;width:57px;height:35.6px;border:2px solid #c3c3c3;background:linear-gradient(#e8eff9,#e0e9f5)"></div>
<div class="a" style="left:851.8px;top:798.9px;width:14px;height:3px;background:#d4d6da;opacity:.8"></div>
<div class="a" style="left:918.6px;top:781.9px;width:57px;height:35.6px;border:2px solid #c3c3c3;background:linear-gradient(#e8eff9,#e0e9f5)"></div>
<div class="a" style="left:923.1px;top:798.9px;width:14px;height:3px;background:#d4d6da;opacity:.8"></div>
<div class="a" style="left:1018.7px;top:781.9px;width:57px;height:35.6px;border:2px solid #c3c3c3;background:linear-gradient(160deg,#efefef,#e6e6e6)"></div>
<span class="t" style="left:1025.2px;top:795.5px;font-size:12.5px;color:#d6cbcb;transform:scaleX(0.9898);-webkit-text-stroke:.35px #d6cbcb;">SFP+ 16</span>
<div class="a" style="left:1092.5px;top:781.9px;width:57px;height:35.6px;border:2px solid #c3c3c3;background:linear-gradient(160deg,#efefef,#e6e6e6)"></div>
<span class="t" style="left:1099.0px;top:795.5px;font-size:12.5px;color:#d6cbcb;transform:scaleX(0.9898);-webkit-text-stroke:.35px #d6cbcb;">SFP+ 17</span>
<div class="a" style="left:1166.2px;top:781.9px;width:57px;height:35.6px;border:2px solid #c3c3c3;background:linear-gradient(160deg,#efefef,#e6e6e6)"></div>
<span class="t" style="left:1172.7px;top:795.5px;font-size:12.5px;color:#d6cbcb;transform:scaleX(0.9898);-webkit-text-stroke:.35px #d6cbcb;">SFP+ 18</span>
<div class="a" style="left:393.0px;top:827.3px;width:57px;height:35.2px;border:2px solid #c3c3c3;background:linear-gradient(160deg,#efefef,#e6e6e6)"></div>
<span class="t" style="left:399.5px;top:840.7px;font-size:12.5px;color:#d6cbcb;transform:scaleX(1.1535);-webkit-text-stroke:.35px #d6cbcb;">SFP+ 4</span>
<div class="a" style="left:466.7px;top:827.3px;width:57px;height:35.2px;border:2px solid #c3c3c3;background:linear-gradient(160deg,#efefef,#e6e6e6)"></div>
<span class="t" style="left:473.2px;top:840.7px;font-size:12.5px;color:#d6cbcb;transform:scaleX(1.1535);-webkit-text-stroke:.35px #d6cbcb;">SFP+ 5</span>
<div class="a" style="left:540.4px;top:827.3px;width:57px;height:35.2px;border:2px solid #c3c3c3;background:linear-gradient(160deg,#efefef,#e6e6e6)"></div>
<span class="t" style="left:546.9px;top:840.7px;font-size:12.5px;color:#d6cbcb;transform:scaleX(1.1535);-webkit-text-stroke:.35px #d6cbcb;">SFP+ 6</span>
<div class="a" style="left:614.1px;top:827.3px;width:57px;height:35.2px;border:2px solid #c3c3c3;background:linear-gradient(160deg,#efefef,#e6e6e6)"></div>
<span class="t" style="left:620.6px;top:840.7px;font-size:12.5px;color:#d6cbcb;transform:scaleX(1.1535);-webkit-text-stroke:.35px #d6cbcb;">SFP+ 7</span>
<div class="a" style="left:699.8px;top:827.3px;width:57px;height:35.2px;border:2px solid #c3c3c3;background:linear-gradient(#e8eff9,#e0e9f5)"></div>
<div class="a" style="left:704.3px;top:844.3px;width:14px;height:3px;background:#d4d6da;opacity:.8"></div>
<div class="a" style="left:773.6px;top:827.3px;width:57px;height:35.2px;border:2px solid #c3c3c3;background:linear-gradient(#e8eff9,#e0e9f5)"></div>
<div class="a" style="left:778.1px;top:844.3px;width:14px;height:3px;background:#d4d6da;opacity:.8"></div>
<div class="a" style="left:847.3px;top:827.3px;width:57px;height:35.2px;border:2px solid #c3c3c3;background:linear-gradient(160deg,#efefef,#e6e6e6)"></div>
<span class="t" style="left:853.8px;top:840.7px;font-size:12.5px;color:#d6cbcb;transform:scaleX(0.9898);-webkit-text-stroke:.35px #d6cbcb;">SFP+ 14</span>
<div class="a" style="left:918.6px;top:827.3px;width:57px;height:35.2px;border:2px solid #c3c3c3;background:linear-gradient(160deg,#efefef,#e6e6e6)"></div>
<span class="t" style="left:925.1px;top:840.7px;font-size:12.5px;color:#d6cbcb;transform:scaleX(0.9898);-webkit-text-stroke:.35px #d6cbcb;">SFP+ 15</span>
<div class="a" style="left:1018.7px;top:827.3px;width:57px;height:35.2px;border:2px solid #c3c3c3;background:linear-gradient(160deg,#efefef,#e6e6e6)"></div>
<span class="t" style="left:1025.2px;top:840.7px;font-size:12.5px;color:#d6cbcb;transform:scaleX(0.9898);-webkit-text-stroke:.35px #d6cbcb;">SFP+ 20</span>
<div class="a" style="left:1092.5px;top:827.3px;width:57px;height:35.2px;border:2px solid #c3c3c3;background:linear-gradient(160deg,#efefef,#e6e6e6)"></div>
<span class="t" style="left:1099.0px;top:840.7px;font-size:12.5px;color:#d6cbcb;transform:scaleX(0.9898);-webkit-text-stroke:.35px #d6cbcb;">SFP+ 21</span>
<div class="a" style="left:1166.2px;top:827.3px;width:57px;height:35.2px;border:2px solid #c3c3c3;background:linear-gradient(160deg,#efefef,#e6e6e6)"></div>
<span class="t" style="left:1172.7px;top:840.7px;font-size:12.5px;color:#d6cbcb;transform:scaleX(0.9898);-webkit-text-stroke:.35px #d6cbcb;">SFP+ 22</span>
<span class="t" style="left:718.9px;top:796.1px;font-size:36px;color:#000;transform:scaleX(0.9529);">12</span>
<svg style="left:412.0px;top:791.0px" width="35.6" height="31.4" viewBox="0 0 37.8 33.5"><rect x="0" y="15.5" width="37.8" height="16.4" rx="1" fill="#858585"/><rect x="15.8" y="5.6" width="6.2" height="4.6" fill="#8c8c8c"/><path d="M2.6 0 H13.6 V2.9 H2.6Z" fill="#8e8e8e"/><path d="M2.6 2.8 H13.6 L16.2 6.2 V11.4 L15.2 15 H1 L0 11.4 V6.2Z" fill="#008000" stroke="#0c1018" stroke-width=".8" stroke-opacity=".6"/><rect x="0" y="14.4" width="16.2" height="1.7" fill="#141414"/><rect x="2.4" y="17.4" width="11.4" height="12.4" fill="#cdcdcd"/><rect x="4.6" y="19.8" width="7" height="7.6" fill="#a0a0a0"/><rect x="6.3" y="21.7" width="3.6" height="3.8" fill="#4c4c4c"/><rect x="4" y="31.2" width="8.6" height="2.3" fill="#0c0c0c"/><path d="M24.200000000000003 0 H35.2 V2.9 H24.200000000000003Z" fill="#8e8e8e"/><path d="M24.200000000000003 2.8 H35.2 L37.8 6.2 V11.4 L36.8 15 H22.6 L21.6 11.4 V6.2Z" fill="#008000" stroke="#0c1018" stroke-width=".8" stroke-opacity=".6"/><rect x="21.6" y="14.4" width="16.2" height="1.7" fill="#141414"/><rect x="24.0" y="17.4" width="11.4" height="12.4" fill="#cdcdcd"/><rect x="26.200000000000003" y="19.8" width="7" height="7.6" fill="#a0a0a0"/><rect x="27.900000000000002" y="21.7" width="3.6" height="3.8" fill="#4c4c4c"/><rect x="25.6" y="31.2" width="8.6" height="2.3" fill="#0c0c0c"/></svg>
<span class="t" style="left:419.1px;top:751.4px;font-size:36px;color:#000;transform:scaleX(0.9525);">0</span>
<svg style="left:485.7px;top:791.0px" width="35.6" height="31.4" viewBox="0 0 37.8 33.5"><rect x="0" y="15.5" width="37.8" height="16.4" rx="1" fill="#858585"/><rect x="15.8" y="5.6" width="6.2" height="4.6" fill="#8c8c8c"/><path d="M2.6 0 H13.6 V2.9 H2.6Z" fill="#8e8e8e"/><path d="M2.6 2.8 H13.6 L16.2 6.2 V11.4 L15.2 15 H1 L0 11.4 V6.2Z" fill="#008000" stroke="#0c1018" stroke-width=".8" stroke-opacity=".6"/><rect x="0" y="14.4" width="16.2" height="1.7" fill="#141414"/><rect x="2.4" y="17.4" width="11.4" height="12.4" fill="#cdcdcd"/><rect x="4.6" y="19.8" width="7" height="7.6" fill="#a0a0a0"/><rect x="6.3" y="21.7" width="3.6" height="3.8" fill="#4c4c4c"/><rect x="4" y="31.2" width="8.6" height="2.3" fill="#0c0c0c"/><path d="M24.200000000000003 0 H35.2 V2.9 H24.200000000000003Z" fill="#8e8e8e"/><path d="M24.200000000000003 2.8 H35.2 L37.8 6.2 V11.4 L36.8 15 H22.6 L21.6 11.4 V6.2Z" fill="#008000" stroke="#0c1018" stroke-width=".8" stroke-opacity=".6"/><rect x="21.6" y="14.4" width="16.2" height="1.7" fill="#141414"/><rect x="24.0" y="17.4" width="11.4" height="12.4" fill="#cdcdcd"/><rect x="26.200000000000003" y="19.8" width="7" height="7.6" fill="#a0a0a0"/><rect x="27.900000000000002" y="21.7" width="3.6" height="3.8" fill="#4c4c4c"/><rect x="25.6" y="31.2" width="8.6" height="2.3" fill="#0c0c0c"/></svg>
<span class="t" style="left:492.8px;top:751.4px;font-size:36px;color:#000;transform:scaleX(0.9525);">1</span>
<svg style="left:718.8px;top:791.0px" width="35.6" height="31.4" viewBox="0 0 37.8 33.5"><rect x="0" y="15.5" width="37.8" height="16.4" rx="1" fill="#858585"/><rect x="15.8" y="5.6" width="6.2" height="4.6" fill="#8c8c8c"/><path d="M2.6 0 H13.6 V2.9 H2.6Z" fill="#8e8e8e"/><path d="M2.6 2.8 H13.6 L16.2 6.2 V11.4 L15.2 15 H1 L0 11.4 V6.2Z" fill="#008000" stroke="#0c1018" stroke-width=".8" stroke-opacity=".6"/><rect x="0" y="14.4" width="16.2" height="1.7" fill="#141414"/><rect x="2.4" y="17.4" width="11.4" height="12.4" fill="#cdcdcd"/><rect x="4.6" y="19.8" width="7" height="7.6" fill="#a0a0a0"/><rect x="6.3" y="21.7" width="3.6" height="3.8" fill="#4c4c4c"/><rect x="4" y="31.2" width="8.6" height="2.3" fill="#0c0c0c"/><path d="M24.200000000000003 0 H35.2 V2.9 H24.200000000000003Z" fill="#8e8e8e"/><path d="M24.200000000000003 2.8 H35.2 L37.8 6.2 V11.4 L36.8 15 H22.6 L21.6 11.4 V6.2Z" fill="#008000" stroke="#0c1018" stroke-width=".8" stroke-opacity=".6"/><rect x="21.6" y="14.4" width="16.2" height="1.7" fill="#141414"/><rect x="24.0" y="17.4" width="11.4" height="12.4" fill="#cdcdcd"/><rect x="26.200000000000003" y="19.8" width="7" height="7.6" fill="#a0a0a0"/><rect x="27.900000000000002" y="21.7" width="3.6" height="3.8" fill="#4c4c4c"/><rect x="25.6" y="31.2" width="8.6" height="2.3" fill="#0c0c0c"/></svg>
<span class="t" style="left:725.9px;top:751.4px;font-size:36px;color:#000;transform:scaleX(0.9525);">8</span>
<svg style="left:792.6px;top:791.0px" width="35.6" height="31.4" viewBox="0 0 37.8 33.5"><rect x="0" y="15.5" width="37.8" height="16.4" rx="1" fill="#858585"/><rect x="15.8" y="5.6" width="6.2" height="4.6" fill="#8c8c8c"/><path d="M2.6 0 H13.6 V2.9 H2.6Z" fill="#8e8e8e"/><path d="M2.6 2.8 H13.6 L16.2 6.2 V11.4 L15.2 15 H1 L0 11.4 V6.2Z" fill="#1c3f94" stroke="#0c1018" stroke-width=".8" stroke-opacity=".6"/><rect x="0" y="14.4" width="16.2" height="1.7" fill="#141414"/><rect x="2.4" y="17.4" width="11.4" height="12.4" fill="#cdcdcd"/><rect x="4.6" y="19.8" width="7" height="7.6" fill="#a0a0a0"/><rect x="6.3" y="21.7" width="3.6" height="3.8" fill="#4c4c4c"/><rect x="4" y="31.2" width="8.6" height="2.3" fill="#0c0c0c"/><path d="M24.200000000000003 0 H35.2 V2.9 H24.200000000000003Z" fill="#8e8e8e"/><path d="M24.200000000000003 2.8 H35.2 L37.8 6.2 V11.4 L36.8 15 H22.6 L21.6 11.4 V6.2Z" fill="#1c3f94" stroke="#0c1018" stroke-width=".8" stroke-opacity=".6"/><rect x="21.6" y="14.4" width="16.2" height="1.7" fill="#141414"/><rect x="24.0" y="17.4" width="11.4" height="12.4" fill="#cdcdcd"/><rect x="26.200000000000003" y="19.8" width="7" height="7.6" fill="#a0a0a0"/><rect x="27.900000000000002" y="21.7" width="3.6" height="3.8" fill="#4c4c4c"/><rect x="25.6" y="31.2" width="8.6" height="2.3" fill="#0c0c0c"/></svg>
<span class="t" style="left:799.7px;top:751.4px;font-size:36px;color:#000;transform:scaleX(0.9525);">9</span>
<svg style="left:866.3px;top:791.0px" width="35.6" height="31.4" viewBox="0 0 37.8 33.5"><rect x="0" y="15.5" width="37.8" height="16.4" rx="1" fill="#858585"/><rect x="15.8" y="5.6" width="6.2" height="4.6" fill="#8c8c8c"/><path d="M2.6 0 H13.6 V2.9 H2.6Z" fill="#8e8e8e"/><path d="M2.6 2.8 H13.6 L16.2 6.2 V11.4 L15.2 15 H1 L0 11.4 V6.2Z" fill="#1c3f94" stroke="#0c1018" stroke-width=".8" stroke-opacity=".6"/><rect x="0" y="14.4" width="16.2" height="1.7" fill="#141414"/><rect x="2.4" y="17.4" width="11.4" height="12.4" fill="#cdcdcd"/><rect x="4.6" y="19.8" width="7" height="7.6" fill="#a0a0a0"/><rect x="6.3" y="21.7" width="3.6" height="3.8" fill="#4c4c4c"/><rect x="4" y="31.2" width="8.6" height="2.3" fill="#0c0c0c"/><path d="M24.200000000000003 0 H35.2 V2.9 H24.200000000000003Z" fill="#8e8e8e"/><path d="M24.200000000000003 2.8 H35.2 L37.8 6.2 V11.4 L36.8 15 H22.6 L21.6 11.4 V6.2Z" fill="#1c3f94" stroke="#0c1018" stroke-width=".8" stroke-opacity=".6"/><rect x="21.6" y="14.4" width="16.2" height="1.7" fill="#141414"/><rect x="24.0" y="17.4" width="11.4" height="12.4" fill="#cdcdcd"/><rect x="26.200000000000003" y="19.8" width="7" height="7.6" fill="#a0a0a0"/><rect x="27.900000000000002" y="21.7" width="3.6" height="3.8" fill="#4c4c4c"/><rect x="25.6" y="31.2" width="8.6" height="2.3" fill="#0c0c0c"/></svg>
<span class="t" style="left:863.8px;top:751.4px;font-size:36px;color:#000;transform:scaleX(0.9529);">10</span>
<svg style="left:937.6px;top:791.0px" width="35.6" height="31.4" viewBox="0 0 37.8 33.5"><rect x="0" y="15.5" width="37.8" height="16.4" rx="1" fill="#858585"/><rect x="15.8" y="5.6" width="6.2" height="4.6" fill="#8c8c8c"/><path d="M2.6 0 H13.6 V2.9 H2.6Z" fill="#8e8e8e"/><path d="M2.6 2.8 H13.6 L16.2 6.2 V11.4 L15.2 15 H1 L0 11.4 V6.2Z" fill="#1c3f94" stroke="#0c1018" stroke-width=".8" stroke-opacity=".6"/><rect x="0" y="14.4" width="16.2" height="1.7" fill="#141414"/><rect x="2.4" y="17.4" width="11.4" height="12.4" fill="#cdcdcd"/><rect x="4.6" y="19.8" width="7" height="7.6" fill="#a0a0a0"/><rect x="6.3" y="21.7" width="3.6" height="3.8" fill="#4c4c4c"/><rect x="4" y="31.2" width="8.6" height="2.3" fill="#0c0c0c"/><path d="M24.200000000000003 0 H35.2 V2.9 H24.200000000000003Z" fill="#8e8e8e"/><path d="M24.200000000000003 2.8 H35.2 L37.8 6.2 V11.4 L36.8 15 H22.6 L21.6 11.4 V6.2Z" fill="#1c3f94" stroke="#0c1018" stroke-width=".8" stroke-opacity=".6"/><rect x="21.6" y="14.4" width="16.2" height="1.7" fill="#141414"/><rect x="24.0" y="17.4" width="11.4" height="12.4" fill="#cdcdcd"/><rect x="26.200000000000003" y="19.8" width="7" height="7.6" fill="#a0a0a0"/><rect x="27.900000000000002" y="21.7" width="3.6" height="3.8" fill="#4c4c4c"/><rect x="25.6" y="31.2" width="8.6" height="2.3" fill="#0c0c0c"/></svg>
<span class="t" style="left:935.1px;top:751.4px;font-size:36px;color:#000;transform:scaleX(1.0210);">11</span>
<span class="t" style="left:792.9px;top:796.1px;font-size:36px;color:#000;transform:scaleX(0.9529);">13</span>
<svg style="left:718.8px;top:836.2px" width="35.6" height="31.4" viewBox="0 0 37.8 33.5"><rect x="0" y="15.5" width="37.8" height="16.4" rx="1" fill="#858585"/><rect x="15.8" y="5.6" width="6.2" height="4.6" fill="#8c8c8c"/><path d="M2.6 0 H13.6 V2.9 H2.6Z" fill="#8e8e8e"/><path d="M2.6 2.8 H13.6 L16.2 6.2 V11.4 L15.2 15 H1 L0 11.4 V6.2Z" fill="#1c3f94" stroke="#0c1018" stroke-width=".8" stroke-opacity=".6"/><rect x="0" y="14.4" width="16.2" height="1.7" fill="#141414"/><rect x="2.4" y="17.4" width="11.4" height="12.4" fill="#cdcdcd"/><rect x="4.6" y="19.8" width="7" height="7.6" fill="#a0a0a0"/><rect x="6.3" y="21.7" width="3.6" height="3.8" fill="#4c4c4c"/><rect x="4" y="31.2" width="8.6" height="2.3" fill="#0c0c0c"/><path d="M24.200000000000003 0 H35.2 V2.9 H24.200000000000003Z" fill="#8e8e8e"/><path d="M24.200000000000003 2.8 H35.2 L37.8 6.2 V11.4 L36.8 15 H22.6 L21.6 11.4 V6.2Z" fill="#1c3f94" stroke="#0c1018" stroke-width=".8" stroke-opacity=".6"/><rect x="21.6" y="14.4" width="16.2" height="1.7" fill="#141414"/><rect x="24.0" y="17.4" width="11.4" height="12.4" fill="#cdcdcd"/><rect x="26.200000000000003" y="19.8" width="7" height="7.6" fill="#a0a0a0"/><rect x="27.900000000000002" y="21.7" width="3.6" height="3.8" fill="#4c4c4c"/><rect x="25.6" y="31.2" width="8.6" height="2.3" fill="#0c0c0c"/></svg>
<svg style="left:792.6px;top:836.2px" width="35.6" height="31.4" viewBox="0 0 37.8 33.5"><rect x="0" y="15.5" width="37.8" height="16.4" rx="1" fill="#858585"/><rect x="15.8" y="5.6" width="6.2" height="4.6" fill="#8c8c8c"/><path d="M2.6 0 H13.6 V2.9 H2.6Z" fill="#8e8e8e"/><path d="M2.6 2.8 H13.6 L16.2 6.2 V11.4 L15.2 15 H1 L0 11.4 V6.2Z" fill="#1c3f94" stroke="#0c1018" stroke-width=".8" stroke-opacity=".6"/><rect x="0" y="14.4" width="16.2" height="1.7" fill="#141414"/><rect x="2.4" y="17.4" width="11.4" height="12.4" fill="#cdcdcd"/><rect x="4.6" y="19.8" width="7" height="7.6" fill="#a0a0a0"/><rect x="6.3" y="21.7" width="3.6" height="3.8" fill="#4c4c4c"/><rect x="4" y="31.2" width="8.6" height="2.3" fill="#0c0c0c"/><path d="M24.200000000000003 0 H35.2 V2.9 H24.200000000000003Z" fill="#8e8e8e"/><path d="M24.200000000000003 2.8 H35.2 L37.8 6.2 V11.4 L36.8 15 H22.6 L21.6 11.4 V6.2Z" fill="#1c3f94" stroke="#0c1018" stroke-width=".8" stroke-opacity=".6"/><rect x="21.6" y="14.4" width="16.2" height="1.7" fill="#141414"/><rect x="24.0" y="17.4" width="11.4" height="12.4" fill="#cdcdcd"/><rect x="26.200000000000003" y="19.8" width="7" height="7.6" fill="#a0a0a0"/><rect x="27.900000000000002" y="21.7" width="3.6" height="3.8" fill="#4c4c4c"/><rect x="25.6" y="31.2" width="8.6" height="2.3" fill="#0c0c0c"/></svg>
<span class="t" style="left:1026.0px;top:954.3px;font-size:111px;color:#7d838c;font-family:'DejaVu Sans', sans-serif;font-weight:200;-webkit-text-stroke:4.4px #7d838c;opacity:0.5;transform:scaleX(0.975);">PFC-42</span>
<span class="t" style="left:199.0px;top:953.8px;font-size:36px;color:#000;transform:scaleX(0.9525);">1</span>
<svg style="left:192.3px;top:993.2px" width="34" height="30.5" viewBox="0 0 35 31"><g><path d="M0 0 H35 V23.6 H29.5 L28.6 27.2 H25.8 L24.8 31 H10.2 L9.2 27.2 H6.4 L5.5 23.6 H0Z" fill="#474747" stroke="#3a3a3a" stroke-width="1"/><rect x="0" y="0" width="35" height="2.1" fill="#111"/><path d="M4.8 2.1 H30.2 L29 9.2 H6Z" fill="#c9c1a6"/><path d="M7.5 3.4 H27.5 L27 7.6 H8Z" fill="#fff" opacity=".22"/></g></svg>
<span class="t" style="left:284.8px;top:953.8px;font-size:36px;color:#000;transform:scaleX(0.9525);">2</span>
<svg style="left:278.1px;top:993.2px" width="34" height="30.5" viewBox="0 0 35 31"><g><path d="M0 0 H35 V23.6 H29.5 L28.6 27.2 H25.8 L24.8 31 H10.2 L9.2 27.2 H6.4 L5.5 23.6 H0Z" fill="#474747" stroke="#3a3a3a" stroke-width="1"/><rect x="0" y="0" width="35" height="2.1" fill="#111"/><path d="M4.8 2.1 H30.2 L29 9.2 H6Z" fill="#c9c1a6"/><path d="M7.5 3.4 H27.5 L27 7.6 H8Z" fill="#fff" opacity=".22"/></g></svg>
<span class="t" style="left:372.9px;top:953.8px;font-size:36px;color:#000;transform:scaleX(0.9525);">3</span>
<svg style="left:366.2px;top:993.2px" width="34" height="30.5" viewBox="0 0 35 31"><g><path d="M0 0 H35 V23.6 H29.5 L28.6 27.2 H25.8 L24.8 31 H10.2 L9.2 27.2 H6.4 L5.5 23.6 H0Z" fill="#ffaa00" stroke="#b57a20" stroke-width="1"/><rect x="0" y="0" width="35" height="2.1" fill="#7a4a00"/><path d="M4.8 2.1 H30.2 L29 9.2 H6Z" fill="#ffd08a"/><path d="M7.5 3.4 H27.5 L27 7.6 H8Z" fill="#fff" opacity=".22"/></g></svg>
<span class="t" style="left:458.6px;top:953.8px;font-size:36px;color:#000;transform:scaleX(0.9525);">4</span>
<svg style="left:451.9px;top:993.2px" width="34" height="30.5" viewBox="0 0 35 31"><g><path d="M0 0 H35 V23.6 H29.5 L28.6 27.2 H25.8 L24.8 31 H10.2 L9.2 27.2 H6.4 L5.5 23.6 H0Z" fill="#474747" stroke="#3a3a3a" stroke-width="1"/><rect x="0" y="0" width="35" height="2.1" fill="#111"/><path d="M4.8 2.1 H30.2 L29 9.2 H6Z" fill="#c9c1a6"/><path d="M7.5 3.4 H27.5 L27 7.6 H8Z" fill="#fff" opacity=".22"/></g></svg>
<span class="t" style="left:544.2px;top:953.8px;font-size:36px;color:#000;transform:scaleX(0.9525);">5</span>
<svg style="left:537.5px;top:993.2px" width="34" height="30.5" viewBox="0 0 35 31"><g><path d="M0 0 H35 V23.6 H29.5 L28.6 27.2 H25.8 L24.8 31 H10.2 L9.2 27.2 H6.4 L5.5 23.6 H0Z" fill="#474747" stroke="#3a3a3a" stroke-width="1"/><rect x="0" y="0" width="35" height="2.1" fill="#111"/><path d="M4.8 2.1 H30.2 L29 9.2 H6Z" fill="#c9c1a6"/><path d="M7.5 3.4 H27.5 L27 7.6 H8Z" fill="#fff" opacity=".22"/></g></svg>
<span class="t" style="left:630.1px;top:953.8px;font-size:36px;color:#000;transform:scaleX(0.9525);">6</span>
<svg style="left:623.4px;top:993.2px" width="34" height="30.5" viewBox="0 0 35 31"><g><path d="M0 0 H35 V23.6 H29.5 L28.6 27.2 H25.8 L24.8 31 H10.2 L9.2 27.2 H6.4 L5.5 23.6 H0Z" fill="#474747" stroke="#3a3a3a" stroke-width="1"/><rect x="0" y="0" width="35" height="2.1" fill="#111"/><path d="M4.8 2.1 H30.2 L29 9.2 H6Z" fill="#c9c1a6"/><path d="M7.5 3.4 H27.5 L27 7.6 H8Z" fill="#fff" opacity=".22"/></g></svg>
<span class="t" style="left:715.7px;top:953.8px;font-size:36px;color:#000;transform:scaleX(0.9525);">7</span>
<svg style="left:709.0px;top:993.2px" width="34" height="30.5" viewBox="0 0 35 31"><g><path d="M0 0 H35 V23.6 H29.5 L28.6 27.2 H25.8 L24.8 31 H10.2 L9.2 27.2 H6.4 L5.5 23.6 H0Z" fill="#474747" stroke="#3a3a3a" stroke-width="1"/><rect x="0" y="0" width="35" height="2.1" fill="#111"/><path d="M4.8 2.1 H30.2 L29 9.2 H6Z" fill="#c9c1a6"/><path d="M7.5 3.4 H27.5 L27 7.6 H8Z" fill="#fff" opacity=".22"/></g></svg>
<span class="t" style="left:798.7px;top:953.8px;font-size:36px;color:#000;transform:scaleX(0.9525);">8</span>
<svg style="left:792.0px;top:993.2px" width="34" height="30.5" viewBox="0 0 35 31"><g><path d="M0 0 H35 V23.6 H29.5 L28.6 27.2 H25.8 L24.8 31 H10.2 L9.2 27.2 H6.4 L5.5 23.6 H0Z" fill="#474747" stroke="#3a3a3a" stroke-width="1"/><rect x="0" y="0" width="35" height="2.1" fill="#111"/><path d="M4.8 2.1 H30.2 L29 9.2 H6Z" fill="#c9c1a6"/><path d="M7.5 3.4 H27.5 L27 7.6 H8Z" fill="#fff" opacity=".22"/></g></svg>
<span class="t" style="left:884.5px;top:953.8px;font-size:36px;color:#000;transform:scaleX(0.9525);">9</span>
<svg style="left:877.8px;top:993.2px" width="34" height="30.5" viewBox="0 0 35 31"><g><path d="M0 0 H35 V23.6 H29.5 L28.6 27.2 H25.8 L24.8 31 H10.2 L9.2 27.2 H6.4 L5.5 23.6 H0Z" fill="#474747" stroke="#3a3a3a" stroke-width="1"/><rect x="0" y="0" width="35" height="2.1" fill="#111"/><path d="M4.8 2.1 H30.2 L29 9.2 H6Z" fill="#c9c1a6"/><path d="M7.5 3.4 H27.5 L27 7.6 H8Z" fill="#fff" opacity=".22"/></g></svg>
<span class="t" style="left:960.3px;top:953.8px;font-size:36px;color:#000;transform:scaleX(0.9529);">10</span>
<svg style="left:963.2px;top:993.2px" width="34" height="30.5" viewBox="0 0 35 31"><g><path d="M0 0 H35 V23.6 H29.5 L28.6 27.2 H25.8 L24.8 31 H10.2 L9.2 27.2 H6.4 L5.5 23.6 H0Z" fill="#474747" stroke="#3a3a3a" stroke-width="1"/><rect x="0" y="0" width="35" height="2.1" fill="#111"/><path d="M4.8 2.1 H30.2 L29 9.2 H6Z" fill="#c9c1a6"/><path d="M7.5 3.4 H27.5 L27 7.6 H8Z" fill="#fff" opacity=".22"/></g></svg>
<span class="t" style="left:1050.5px;top:953.8px;font-size:36px;color:#000;transform:scaleX(1.0210);">11</span>
<svg style="left:1053.4px;top:993.2px" width="34" height="30.5" viewBox="0 0 35 31"><g><path d="M0 0 H35 V23.6 H29.5 L28.6 27.2 H25.8 L24.8 31 H10.2 L9.2 27.2 H6.4 L5.5 23.6 H0Z" fill="#474747" stroke="#3a3a3a" stroke-width="1"/><rect x="0" y="0" width="35" height="2.1" fill="#111"/><path d="M4.8 2.1 H30.2 L29 9.2 H6Z" fill="#c9c1a6"/><path d="M7.5 3.4 H27.5 L27 7.6 H8Z" fill="#fff" opacity=".22"/></g></svg>
<span class="t" style="left:1133.8px;top:953.8px;font-size:36px;color:#000;transform:scaleX(0.9529);">12</span>
<svg style="left:1136.7px;top:993.2px" width="34" height="30.5" viewBox="0 0 35 31"><g><path d="M0 0 H35 V23.6 H29.5 L28.6 27.2 H25.8 L24.8 31 H10.2 L9.2 27.2 H6.4 L5.5 23.6 H0Z" fill="#474747" stroke="#3a3a3a" stroke-width="1"/><rect x="0" y="0" width="35" height="2.1" fill="#111"/><path d="M4.8 2.1 H30.2 L29 9.2 H6Z" fill="#c9c1a6"/><path d="M7.5 3.4 H27.5 L27 7.6 H8Z" fill="#fff" opacity=".22"/></g></svg>
<span class="t" style="left:874.7px;top:1154.3px;font-size:111px;color:#7d8a99;font-family:'DejaVu Sans', sans-serif;font-weight:200;-webkit-text-stroke:4.4px #7d8a99;opacity:0.5;transform:scaleX(0.966);">Provider ASP</span>
<span class="t" style="left:254.1px;top:1157.7px;font-size:36px;color:#000;transform:scaleX(0.9525);">1</span>
<svg style="left:247.0px;top:1197.8px" width="34.6" height="31.5" viewBox="0 0 35 31"><g><path d="M0 0 H35 V23.6 H29.5 L28.6 27.2 H25.8 L24.8 31 H10.2 L9.2 27.2 H6.4 L5.5 23.6 H0Z" fill="#008000" stroke="#0a3a0a" stroke-width="1"/><rect x="0" y="0" width="35" height="2.1" fill="#111"/><path d="M4.8 2.1 H30.2 L29 9.2 H6Z" fill="#c2d3a4"/><path d="M7.5 3.4 H27.5 L27 7.6 H8Z" fill="#fff" opacity=".22"/></g></svg>
<span class="t" style="left:423.1px;top:1157.7px;font-size:36px;color:#000;transform:scaleX(0.9525);">2</span>
<svg style="left:416.0px;top:1197.8px" width="34.6" height="31.5" viewBox="0 0 35 31"><g><path d="M0 0 H35 V23.6 H29.5 L28.6 27.2 H25.8 L24.8 31 H10.2 L9.2 27.2 H6.4 L5.5 23.6 H0Z" fill="#1c3f8f" stroke="#0c1a40" stroke-width="1"/><rect x="0" y="0" width="35" height="2.1" fill="#111"/><path d="M4.8 2.1 H30.2 L29 9.2 H6Z" fill="#b9bbc4"/><path d="M7.5 3.4 H27.5 L27 7.6 H8Z" fill="#fff" opacity=".22"/></g></svg>
<span class="t" style="left:589.7px;top:1157.7px;font-size:36px;color:#000;transform:scaleX(0.9525);">3</span>
<svg style="left:582.6px;top:1197.8px" width="34.6" height="31.5" viewBox="0 0 35 31"><g><path d="M0 0 H35 V23.6 H29.5 L28.6 27.2 H25.8 L24.8 31 H10.2 L9.2 27.2 H6.4 L5.5 23.6 H0Z" fill="#1c3f8f" stroke="#0c1a40" stroke-width="1"/><rect x="0" y="0" width="35" height="2.1" fill="#111"/><path d="M4.8 2.1 H30.2 L29 9.2 H6Z" fill="#b9bbc4"/><path d="M7.5 3.4 H27.5 L27 7.6 H8Z" fill="#fff" opacity=".22"/></g></svg>
<span class="t" style="left:755.3px;top:1157.7px;font-size:36px;color:#000;transform:scaleX(0.9525);">4</span>
<svg style="left:748.2px;top:1197.8px" width="34.6" height="31.5" viewBox="0 0 35 31"><g><path d="M0 0 H35 V23.6 H29.5 L28.6 27.2 H25.8 L24.8 31 H10.2 L9.2 27.2 H6.4 L5.5 23.6 H0Z" fill="#1c3f8f" stroke="#0c1a40" stroke-width="1"/><rect x="0" y="0" width="35" height="2.1" fill="#111"/><path d="M4.8 2.1 H30.2 L29 9.2 H6Z" fill="#b9bbc4"/><path d="M7.5 3.4 H27.5 L27 7.6 H8Z" fill="#fff" opacity=".22"/></g></svg>
<span class="t" style="left:919.9px;top:1157.7px;font-size:36px;color:#000;transform:scaleX(0.9525);">5</span>
<svg style="left:912.8px;top:1197.8px" width="34.6" height="31.5" viewBox="0 0 35 31"><g><path d="M0 0 H35 V23.6 H29.5 L28.6 27.2 H25.8 L24.8 31 H10.2 L9.2 27.2 H6.4 L5.5 23.6 H0Z" fill="#1c3f8f" stroke="#0c1a40" stroke-width="1"/><rect x="0" y="0" width="35" height="2.1" fill="#111"/><path d="M4.8 2.1 H30.2 L29 9.2 H6Z" fill="#b9bbc4"/><path d="M7.5 3.4 H27.5 L27 7.6 H8Z" fill="#fff" opacity=".22"/></g></svg>
<span class="t" style="left:1086.5px;top:1157.7px;font-size:36px;color:#000;transform:scaleX(0.9525);">6</span>
<svg style="left:1079.4px;top:1197.8px" width="34.6" height="31.5" viewBox="0 0 35 31"><g><path d="M0 0 H35 V23.6 H29.5 L28.6 27.2 H25.8 L24.8 31 H10.2 L9.2 27.2 H6.4 L5.5 23.6 H0Z" fill="#1c3f8f" stroke="#0c1a40" stroke-width="1"/><rect x="0" y="0" width="35" height="2.1" fill="#111"/><path d="M4.8 2.1 H30.2 L29 9.2 H6Z" fill="#b9bbc4"/><path d="M7.5 3.4 H27.5 L27 7.6 H8Z" fill="#fff" opacity=".22"/></g></svg>
<div class="a" style="left:265.4px;top:879.5px;width:146px;height:41px;transform:rotate(-38deg);border-radius:9px;background:rgba(50,150,210,.43)"><span class="t" style="left:11px;top:5px;font-size:31px;color:#1a1a1a;letter-spacing:-.2px">Geplant</span></div>
<div class="a" style="left:353.5px;top:879.5px;width:146px;height:41px;transform:rotate(-38deg);border-radius:9px;background:rgba(50,150,210,.43)"><span class="t" style="left:11px;top:5px;font-size:31px;color:#1a1a1a;letter-spacing:-.2px">Geplant</span></div>
<div class="a" style="left:439.2px;top:879.5px;width:146px;height:41px;transform:rotate(-38deg);border-radius:9px;background:rgba(50,150,210,.43)"><span class="t" style="left:11px;top:5px;font-size:31px;color:#1a1a1a;letter-spacing:-.2px">Geplant</span></div>
<div class="a" style="left:524.8px;top:879.5px;width:146px;height:41px;transform:rotate(-38deg);border-radius:9px;background:rgba(50,150,210,.43)"><span class="t" style="left:11px;top:5px;font-size:31px;color:#1a1a1a;letter-spacing:-.2px">Geplant</span></div>
<div class="a" style="left:610.7px;top:879.5px;width:146px;height:41px;transform:rotate(-38deg);border-radius:9px;background:rgba(50,150,210,.43)"><span class="t" style="left:11px;top:5px;font-size:31px;color:#1a1a1a;letter-spacing:-.2px">Geplant</span></div>
<div class="a" style="left:696.3px;top:879.5px;width:146px;height:41px;transform:rotate(-38deg);border-radius:9px;background:rgba(50,150,210,.43)"><span class="t" style="left:11px;top:5px;font-size:31px;color:#1a1a1a;letter-spacing:-.2px">Geplant</span></div>
<div class="a" style="left:779.3px;top:879.5px;width:146px;height:41px;transform:rotate(-38deg);border-radius:9px;background:rgba(50,150,210,.43)"><span class="t" style="left:11px;top:5px;font-size:31px;color:#1a1a1a;letter-spacing:-.2px">Geplant</span></div>
<div class="a" style="left:865.1px;top:879.5px;width:146px;height:41px;transform:rotate(-38deg);border-radius:9px;background:rgba(50,150,210,.43)"><span class="t" style="left:11px;top:5px;font-size:31px;color:#1a1a1a;letter-spacing:-.2px">Geplant</span></div>
</div>
</body></html>
